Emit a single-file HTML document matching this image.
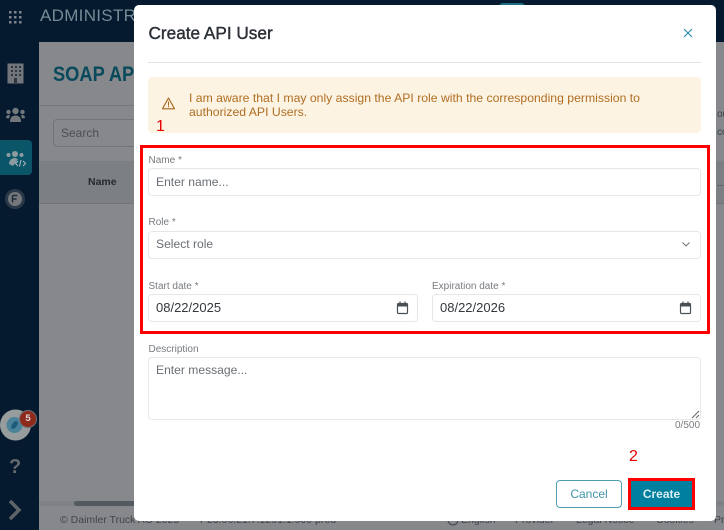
<!DOCTYPE html>
<html lang="en"><head><meta charset="utf-8"><title>Create API User</title>
<style>
html,body{margin:0;padding:0;width:724px;height:530px;overflow:hidden;background:#86888b;font-family:"Liberation Sans",sans-serif}
.a{position:absolute;white-space:nowrap}
.lab{font-size:10px;color:#777b80;line-height:12px}
.inp{position:absolute;box-sizing:border-box;background:#fff;border:1px solid #e6e7e8;border-radius:4px;height:28px}
.ph{font-size:12.1px;color:#6a6f75;line-height:16px}
.val{font-size:13px;color:#33383d;line-height:16px}
.ft{font-size:10.5px;line-height:14px;color:#40454a;top:513px}
</style></head><body>
<!-- background -->
<div class="a" style="left:0;top:0;width:724px;height:42px;background:#05192f"></div>
<div class="a" style="left:0;top:0;width:39px;height:530px;background:#05192f"></div>
<svg class="a" style="left:8px;top:10px" width="14" height="14" fill="#7d848c"><rect x="1" y="1" width="2.500" height="2.500"/><rect x="6" y="1" width="2.500" height="2.500"/><rect x="11" y="1" width="2.500" height="2.500"/><rect x="1" y="6" width="2.500" height="2.500"/><rect x="6" y="6" width="2.500" height="2.500"/><rect x="11" y="6" width="2.500" height="2.500"/><rect x="1" y="11" width="2.500" height="2.500"/><rect x="6" y="11" width="2.500" height="2.500"/><rect x="11" y="11" width="2.500" height="2.500"/></svg>
<div class="a" style="left:40px;top:7px;font-size:17px;line-height:18px;color:#728d95;letter-spacing:.3px">ADMINISTR</div>
<div class="a" style="left:499px;top:3px;width:26px;height:5px;background:#1b6f80;border-radius:4px 4px 0 0"></div>
<!-- sidebar icons -->
<svg class="a" style="left:7px;top:63px" width="17" height="21"><rect width="16" height="20" x=".5" y=".5" fill="#72767a"/><g fill="#2b3640"><rect x="4" y="3" width="2" height="2"/><rect x="8" y="3" width="2" height="2"/><rect x="12" y="3" width="2" height="2"/><rect x="4" y="7" width="2" height="2"/><rect x="8" y="7" width="2" height="2"/><rect x="12" y="7" width="2" height="2"/><rect x="4" y="11" width="2" height="2"/><rect x="8" y="11" width="2" height="2"/><rect x="12" y="11" width="2" height="2"/><rect x="7" y="15" width="3" height="5"/></g></svg>
<svg class="a" style="left:5px;top:107px" width="21" height="16" fill="#72777b"><circle cx="10.500" cy="4" r="3.200"/><circle cx="3.500" cy="5" r="2.200"/><circle cx="17.500" cy="5" r="2.200"/><path d="M5 15c0-5 2.500-6.500 5.500-6.500S16 10 16 15z"/><path d="M1 11c0-2 1-3 3-3l1 .5-1 3zM20 11c0-2-1-3-3-3l-1 .5 1 3z"/></svg>
<div class="a" style="left:0;top:140px;width:32px;height:35px;background:#0a5668;border-radius:0 4px 4px 0"></div>
<svg class="a" style="left:5px;top:150px" width="22" height="18" fill="#8d9ba0"><circle cx="10" cy="4" r="3"/><circle cx="3.500" cy="5" r="2"/><circle cx="16.500" cy="5" r="2"/><path d="M4 14c0-4 3-6 6-6l3 1-5 7z"/><path d="M13 11l-2.500 2.500L13 16M16 10l-1.500 6.500M18 11l2.500 2.500L18 16" fill="none" stroke="#a8b3b6" stroke-width="1.100"/></svg>
<svg class="a" style="left:4px;top:188px" width="22" height="22"><circle cx="11" cy="11" r="10" fill="#2a3949"/><circle cx="11" cy="11" r="7" fill="#74787b"/><path d="M8.500 7.500h5M8.500 7.500v7M8.500 11h4" stroke="#1f2d3a" stroke-width="1.500" fill="none"/></svg>
<svg class="a" style="left:0;top:409px" width="36" height="34"><circle cx="15.500" cy="16" r="15.500" fill="#979c9d"/><circle cx="14.500" cy="16" r="8" fill="#4a8299"/><ellipse cx="14.500" cy="16" rx="2.500" ry="4.500" transform="rotate(35 14.500 16)" fill="#1e5b78"/></svg>
<div class="a" style="left:19px;top:410px;width:16px;height:16px;border-radius:50%;background:#8e2a1c;border:1px solid #6e7174;color:#d8d8d8;font-size:9.500px;font-weight:bold;line-height:16px;text-align:center">5</div>
<div class="a" style="left:9px;top:456px;font-size:20px;font-weight:bold;line-height:22px;color:#64696e">?</div>
<svg class="a" style="left:7px;top:498px" width="16" height="24"><path d="M3 3l9 9-9 9" fill="none" stroke="#5f6469" stroke-width="3.500"/></svg>
<!-- page content -->
<div class="a" style="left:53px;top:62px;font-size:21px;font-weight:bold;line-height:26px;color:#084a5c;transform:scaleX(.87);transform-origin:0 0">SOAP AP</div>
<div class="a" style="left:39px;top:105px;width:95px;height:1px;background:#777a7d"></div>
<div class="a" style="left:53px;top:119px;width:90px;height:28px;box-sizing:border-box;border:1px solid #717579;border-radius:4px"></div>
<div class="a" style="left:61px;top:125px;font-size:12px;line-height:16px;color:#4b5055">Search</div>
<div class="a" style="left:39px;top:161px;width:685px;height:43px;background:#7d8083;border-bottom:1px solid #717376;box-sizing:border-box"></div>
<div class="a" style="left:88px;top:175px;font-size:10.500px;font-weight:bold;line-height:14px;color:#26292c">Name</div>
<div class="a" style="left:717px;top:108px;font-size:10px;line-height:14px;color:#3c4044">ou</div>
<div class="a" style="left:717px;top:126px;font-size:10px;line-height:14px;color:#3c4044">co</div>
<div class="a" style="left:717px;top:177px;font-size:10px;line-height:14px;color:#3c4044">...</div>
<div class="a" style="left:39px;top:501px;width:685px;height:5px;background:#7f8284"></div>
<div class="a" style="left:74px;top:501px;width:100px;height:5px;background:#52595f;border-radius:3px"></div>
<div class="a ft" style="left:60px">© Daimler Truck AG 2025</div>
<div class="a ft" style="left:200px">P23.06.21.7.1291.1.000 prod</div>
<svg class="a" style="left:447px;top:514px" width="12" height="12"><circle cx="6" cy="6" r="5" fill="none" stroke="#40454a"/></svg>
<div class="a ft" style="left:461px">English</div>
<div class="a ft" style="left:515px">Provider</div>
<div class="a ft" style="left:576px">Legal Notice</div>
<div class="a ft" style="left:656px">Cookies</div>
<div class="a ft" style="left:714px">Pr</div>
<!-- modal -->
<div class="a" style="left:134px;top:5px;width:582px;height:516px;background:#fff;border-radius:5px"></div>
<div class="a" style="left:148.500px;top:22px;font-size:17.200px;line-height:22px;color:#2b3036;-webkit-text-stroke:.4px #2b3036">Create API User</div>
<svg class="a" style="left:681.500px;top:27px" width="12" height="12"><path d="M2 2l8 8M10 2l-8 8" stroke="#1f8aa3" stroke-width="1.100" fill="none"/></svg>
<div class="a" style="left:148px;top:62px;width:553px;height:1px;background:#e1e2e4"></div>
<!-- alert -->
<div class="a" style="left:148px;top:77px;width:553px;height:56px;background:#fdf3e3;border-radius:4px"></div>
<svg class="a" style="left:161px;top:96px" width="15" height="15"><path d="M7.500 2L1.500 12.800h12z" fill="none" stroke="#a9661a" stroke-width="1.100" stroke-linejoin="round"/><path d="M7.500 5.500v4M7.500 10v1.300" stroke="#a9661a" stroke-width="1"/></svg>
<div class="a" style="left:189px;top:91px;font-size:12.220px;line-height:14px;color:#b06e22">I am aware that I may only assign the API role with the corresponding permission to<br>authorized API Users.</div>
<div class="a" style="left:156px;top:117px;font-size:16px;line-height:19px;color:#e80000">1</div>
<!-- form -->
<div class="a lab" style="left:148.500px;top:155px">Name *</div>
<div class="inp" style="left:148px;top:168px;width:553px"></div>
<div class="a ph" style="left:156px;top:174px">Enter name...</div>
<div class="a lab" style="left:148.500px;top:217px">Role *</div>
<div class="inp" style="left:148px;top:231px;width:553px"></div>
<div class="a ph" style="left:156px;top:236px">Select role</div>
<svg class="a" style="left:681px;top:240px" width="10" height="9"><path d="M1.500 2.500L5 6l3.500-3.500" stroke="#666b70" stroke-width=".9" fill="none"/></svg>
<div class="a lab" style="left:148.500px;top:281px">Start date *</div>
<div class="inp" style="left:148px;top:294px;width:270px"></div>
<div class="a val" style="left:156px;top:300px">08/22/2025</div>
<svg class="a" style="left:396px;top:301px" width="13" height="14"><rect x="1.500" y="2.500" width="10" height="10" rx="1" fill="none" stroke="#4b5055" stroke-width="1.200"/><rect x="1.500" y="2.500" width="10" height="3" fill="#4b5055"/><path d="M4 .5v3M9 .5v3" stroke="#4b5055" stroke-width="1.200"/></svg>
<div class="a lab" style="left:432px;top:281px">Expiration date *</div>
<div class="inp" style="left:432px;top:294px;width:269px"></div>
<div class="a val" style="left:440px;top:300px">08/22/2026</div>
<svg class="a" style="left:679px;top:301px" width="13" height="14"><rect x="1.500" y="2.500" width="10" height="10" rx="1" fill="none" stroke="#4b5055" stroke-width="1.200"/><rect x="1.500" y="2.500" width="10" height="3" fill="#4b5055"/><path d="M4 .5v3M9 .5v3" stroke="#4b5055" stroke-width="1.200"/></svg>
<div class="a" style="left:140px;top:145px;width:570px;height:189px;box-sizing:border-box;border:3px solid #f00"></div>
<div class="a lab" style="left:148.500px;top:344px">Description</div>
<div class="inp" style="left:148px;top:357px;width:553px;height:63px"></div>
<div class="a ph" style="left:156px;top:362px">Enter message...</div>
<svg class="a" style="left:691px;top:410px" width="10" height="10"><path d="M1 8l7-7M5 8l3-3" stroke="#666" stroke-width="1"/></svg>
<div class="a" style="left:675px;top:420px;font-size:10px;line-height:12px;color:#777b80">0/500</div>
<div class="a" style="left:629px;top:447px;font-size:16px;line-height:19px;color:#e80000">2</div>
<div class="a" style="left:556px;top:480px;width:66px;height:28px;box-sizing:border-box;border:1px solid #4d9db2;border-radius:4px;color:#3f93a9;font-size:12px;line-height:26px;text-align:center">Cancel</div>
<div class="a" style="left:628px;top:478px;width:67px;height:32px;box-sizing:border-box;border:3px solid #f00;background:#00809e;color:#d9edf2;font-size:12px;font-weight:bold;line-height:26px;text-align:center">Create</div>
</body></html>
